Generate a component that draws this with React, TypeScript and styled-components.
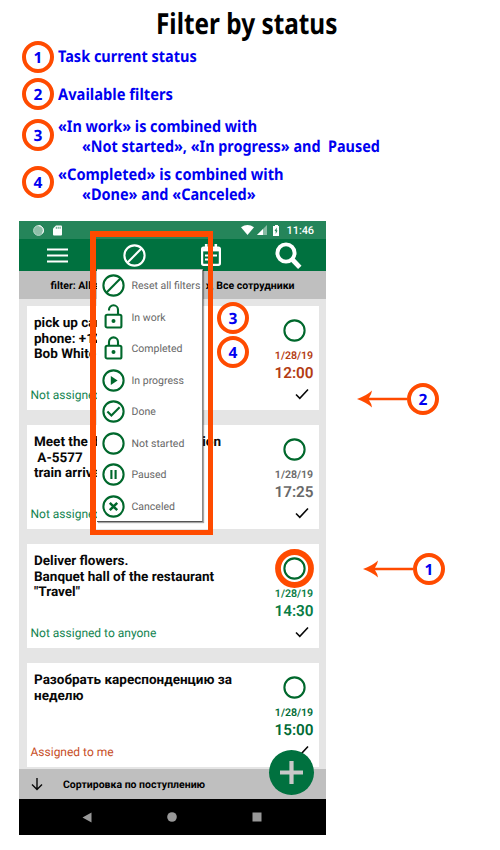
import React from "react";
import styled, { createGlobalStyle } from "styled-components";

const GREEN = "#00713f";
const ICON = "#00682c";
const ORANGE = "#ff4b00";

const Global = createGlobalStyle`
  * { box-sizing: border-box; }
  body { margin: 0; background: #fff; font-family: Roboto, sans-serif; text-rendering: geometricPrecision; }
  svg { display: block; flex: none; overflow: visible; }
`;

const Page = styled.main`
  position: relative;
  width: 500px;
  height: 850px;
  overflow: hidden;
  background: #fff;
`;

const Title = styled.h1`
  margin: 0;
  height: 40px;
  padding: 4px 0 0 156px;
  font: 700 29px/40px "Noto Sans", sans-serif;
  color: #000;
  white-space: pre;
`;

const Condensed = styled.span<{ $x: number }>`
  display: inline-block;
  transform: scaleX(${(p) => p.$x});
  transform-origin: left center;
`;

const Legend = styled.section`
  height: 181px;
  padding: 0.5px 0 0 22px;
`;

const LegendRow = styled.div<{ $gap: number }>`
  display: flex;
  align-items: flex-start;
  gap: 4px;
  margin-top: ${(p) => p.$gap}px;
  height: 32px;
`;

const LegendText = styled.div<{ $shift: number }>`
  display: flex;
  flex-direction: column;
  align-items: flex-start;
  margin-top: ${(p) => p.$shift}px;
  font: 700 16px/20px "Noto Sans", sans-serif;
  color: #0000f0;
  white-space: pre;
`;

const Indented = styled.span`
  padding-left: 24px;
`;

const Badge = styled.span`
  display: flex;
  flex: none;
  align-items: center;
  justify-content: center;
  width: 32px;
  height: 32px;
  border: 4px solid ${ORANGE};
  border-radius: 50%;
  background: #fff;
  color: #0000f0;
  font: 700 15.5px/24px "Noto Sans", sans-serif;
`;

const Callout = styled.div<{ $x: number; $y: number }>`
  position: absolute;
  left: ${(p) => p.$x}px;
  top: ${(p) => p.$y}px;
  display: flex;
  align-items: center;
`;

const Frame = styled.div`
  position: absolute;
  left: 90px;
  top: 231px;
  width: 123px;
  height: 304px;
  border: 6px solid ${ORANGE};
  border-width: 6px 5px 5px 6px;
`;

const Phone = styled.section`
  position: relative;
  display: flex;
  flex-direction: column;
  width: 307px;
  height: 614px;
  margin-left: 19px;
  background: #e5e5e5;
`;

const StatusBar = styled.div`
  display: flex;
  align-items: center;
  height: 18px;
  padding: 0 12px 0 14px;
  background: #25855a;
  color: #fff;
  font-size: 11px;
  font-weight: 500;
`;

const StatusSide = styled.div<{ $gap: number }>`
  display: flex;
  align-items: center;
  gap: ${(p) => p.$gap}px;
`;

const Clock = styled.span`
  padding-left: 2px;
  letter-spacing: -0.1px;
`;

const Spacer = styled.div`
  flex: 1;
`;

const Toolbar = styled.div`
  display: flex;
  align-items: center;
  height: 32px;
  padding-left: 28px;
  background: ${GREEN};
`;

const ToolSlot = styled.div<{ $width: number }>`
  width: ${(p) => p.$width}px;
`;

const FilterBar = styled.div`
  display: flex;
  align-items: center;
  justify-content: space-between;
  height: 28px;
  padding: 0 31.5px;
  background: #bfbfbf;
  font-size: 10.5px;
  font-weight: 700;
  white-space: pre;
`;

const List = styled.div`
  display: flex;
  flex-direction: column;
  gap: 15px;
  height: 470px;
  padding: 7px 7px 0 7.5px;
  overflow: hidden;
`;

const Card = styled.article`
  display: flex;
  flex: none;
  justify-content: space-between;
  height: 104px;
  background: #fff;
`;

const CardText = styled.div`
  display: flex;
  flex-direction: column;
  justify-content: space-between;
  width: 210px;
  padding: 10px 0 6px 4px;
`;

const CardTitle = styled.div`
  padding-left: 3.5px;
  font-size: 13.5px;
  font-weight: 700;
  line-height: 15.6px;
  color: #080808;
  white-space: pre;
`;

const SplitLine = styled.div`
  display: flex;
  justify-content: space-between;
  width: 187px;
`;

const Assignee = styled.div<{ $color: string }>`
  font-size: 12px;
  line-height: 18px;
  color: ${(p) => p.$color};
`;

const CardSide = styled.div<{ $color: string }>`
  display: flex;
  flex-direction: column;
  align-items: center;
  width: 50px;
  padding-top: 13px;
  color: ${(p) => p.$color};
`;

const DateText = styled.div`
  margin-top: 7px;
  font-size: 10.6px;
  font-weight: 600;
  line-height: 14px;
`;

const TimeText = styled.div`
  margin-top: 1px;
  font-size: 15.3px;
  font-weight: 600;
  line-height: 18px;
`;

const CheckSlot = styled.div`
  margin: 6px 0 0 15px;
`;

const SortBar = styled.div`
  display: flex;
  align-items: center;
  gap: 20px;
  height: 30px;
  padding-left: 12px;
  background: #bfbfbf;
  font-size: 10.5px;
  font-weight: 700;
`;

const NavBar = styled.div`
  display: flex;
  align-items: center;
  justify-content: space-between;
  height: 36px;
  padding: 0 64px 0 63px;
  background: #000;
`;

const Fab = styled.div`
  position: absolute;
  left: 250px;
  top: 529px;
  display: flex;
  align-items: center;
  justify-content: center;
  width: 45px;
  height: 45px;
  border-radius: 50%;
  background: ${GREEN};
`;

const Menu = styled.div`
  position: absolute;
  left: 78px;
  top: 48px;
  width: 106px;
  height: 253px;
  background: #fff;
  border-top: 1px solid #bdbdbd;
  border-right: 1px solid #8a8a8a;
  border-bottom: 1px solid #555;
  box-shadow: 1px 1px 1px rgba(0, 0, 0, 0.35);
`;

const MenuItem = styled.div`
  display: flex;
  align-items: center;
  gap: 6.5px;
  height: 31.5px;
  padding-left: 5px;
  font-size: 10.5px;
  color: #666;
  white-space: nowrap;
`;

type IconKind = "ban" | "unlock" | "lock" | "play" | "done" | "circle" | "pause" | "cancel";

const glyphs: Record<IconKind, React.ReactNode> = {
  ban: <path d="M18.4 4.6 4.6 18.4" />,
  unlock: null,
  lock: null,
  play: <path d="m8.8 7 6.8 4.5-6.8 4.5z" fill="currentColor" stroke="none" />,
  done: <path d="m5.4 11.5 4 4 8.2-8.2" />,
  circle: null,
  pause: <path d="M9.4 7v9M13.6 7v9" />,
  cancel: <path d="m7.8 7.8 7.4 7.4M15.2 7.8l-7.4 7.4" strokeWidth="2.5" />,
};

function StatusIcon({ kind, color = ICON }: { kind: IconKind; color?: string }) {
  const locked = kind === "lock" || kind === "unlock";
  return (
    <svg width="23" height="23" viewBox="0 0 23 23" fill="none" stroke={color} color={color} strokeWidth="2.1">
      {locked ? (
        <>
          <rect x="3.6" y="8.7" width="15.8" height="12.8" rx="1.6" />
          <path d={kind === "lock" ? "M7 8.6V4.9a4.5 4.5 0 0 1 9 0v3.7" : "M7 4.4v-.6a4.5 4.5 0 0 1 9 0v4.8"} />
          <circle cx="11.5" cy="15" r="2" fill={color} stroke="none" />
        </>
      ) : (
        <>
          <circle cx="11.5" cy="11.5" r="10.1" />
          {glyphs[kind]}
        </>
      )}
    </svg>
  );
}

const Check = () => (
  <svg width="14" height="12" viewBox="0 0 14 12" fill="none" stroke="#080808" strokeWidth="1.6">
    <path d="m1 6.5 3.8 3.8L13 1.5" />
  </svg>
);

const Arrow = () => (
  <svg width="50" height="18" viewBox="0 0 50 18">
    <path d="M0 9Q9 6 15 .5 14.5 4.5 12 7.7H50v2.6H12Q14.5 13.5 15 17.5 9 12 0 9Z" fill={ORANGE} />
  </svg>
);

const menuItems: [IconKind, string][] = [
  ["ban", "Reset all filters"],
  ["unlock", "In work"],
  ["lock", "Completed"],
  ["play", "In progress"],
  ["done", "Done"],
  ["circle", "Not started"],
  ["pause", "Paused"],
  ["cancel", "Canceled"],
];

type Task = { title: React.ReactNode; who: string; whoColor: string; time: string; color: string };

const tasks: Task[] = [
  { title: "pick up car\nphone: +12\nBob White", who: "Not assigned", whoColor: "#138451", time: "12:00", color: "#b33b12" },
  {
    title: (
      <>
        <SplitLine><span>Meet the d</span><span>ion</span></SplitLine>
        {" A-5577\ntrain arrival"}
      </>
    ),
    who: "Not assigned", whoColor: "#138451", time: "17:25", color: "#686868",
  },
  { title: "Deliver flowers.\nBanquet hall of the restaurant\n\"Travel\"", who: "Not assigned to anyone", whoColor: "#138451", time: "14:30", color: "#087c45" },
  { title: "Разобрать кареспонденцию за\nнеделю", who: "Assigned to me", whoColor: "#c74e27", time: "15:00", color: "#006b35" },
];

export default function App() {
  return (
    <Page>
      <Global />
      <Title><Condensed $x={0.84}>Filter by status</Condensed></Title>
      <Legend>
        <LegendRow $gap={0}>
          <Badge>1</Badge>
          <LegendText $shift={5.5}><Condensed $x={0.905}>Task current status</Condensed></LegendText>
        </LegendRow>
        <LegendRow $gap={5.5}>
          <Badge>2</Badge>
          <LegendText $shift={6}><Condensed $x={0.92}>Available filters</Condensed></LegendText>
        </LegendRow>
        <LegendRow $gap={9}>
          <Badge>3</Badge>
          <LegendText $shift={-3}>
            <Condensed $x={0.9}>«In work» is combined with</Condensed>
            <Indented><Condensed $x={0.9}>{"«Not started», «In progress» and  Paused"}</Condensed></Indented>
          </LegendText>
        </LegendRow>
        <LegendRow $gap={15}>
          <Badge>4</Badge>
          <LegendText $shift={-2}>
            <Condensed $x={0.915}>«Completed» is combined with</Condensed>
            <Indented><Condensed $x={0.905}>«Done» and «Canceled»</Condensed></Indented>
          </LegendText>
        </LegendRow>
      </Legend>

      <Phone>
        <StatusBar>
          <StatusSide $gap={9}>
            <svg width="11" height="11" viewBox="0 0 11 11">
              <circle cx="5.5" cy="5.5" r="4.9" fill="#8dbfa8" stroke="#b9d8ca" />
              <path d="M5.5.6a4.9 4.9 0 0 1 4 7.8" fill="none" stroke="#fff" />
            </svg>
            <svg width="9" height="11" viewBox="0 0 9 11">
              <path d="M3 .5h5q1 0 1 1v8q0 1-1 1H1q-1 0-1-1v-6z" fill="#fff" />
              <path d="M3.3 1.8v2M5.2 1.8v2M7.1 1.8v2" stroke="#25855a" strokeWidth=".8" />
            </svg>
          </StatusSide>
          <Spacer />
          <StatusSide $gap={3}>
            <svg width="13" height="10" viewBox="0 0 13 10"><path d="M0 2.2Q6.5-2 13 2.2L6.5 10z" fill="#fff" /></svg>
            <svg width="10" height="10" viewBox="0 0 10 10">
              <path d="M10 0v10H0z" fill="#87bba3" />
              <path d="M6 4v6H0z" fill="#fff" />
            </svg>
            <svg width="12" height="11" viewBox="2 0 12 11">
              <path d="M6 1h1V0h3v1h1v10H5V1z" fill="#fff" />
              <path d="M8.7 2.5 6.5 6h1.2v3L9.6 5.4H8.7z" fill="#25855a" />
            </svg>
            <Clock>11:46</Clock>
          </StatusSide>
        </StatusBar>
        <Toolbar>
          <ToolSlot $width={76}>
            <svg width="21" height="15" viewBox="0 0 21 15" stroke="#fff" strokeWidth="2.2"><path d="M0 1.5h21M0 7.5h21M0 13.5h21" /></svg>
          </ToolSlot>
          <ToolSlot $width={78}><StatusIcon kind="ban" color="#fff" /></ToolSlot>
          <ToolSlot $width={74}>
            <svg width="20" height="22" viewBox="0 0 20 22" fill="none" stroke="#fff" strokeWidth="2.2">
              <rect x="1.1" y="3.6" width="17.8" height="17.2" rx="1.5" />
              <path d="M1 5.8h18" strokeWidth="3.2" />
              <path d="M5.2 0v5M14.8 0v5" strokeWidth="2.6" />
              <path d="M4 11.5h12M4 15.5h7" strokeWidth="2" />
            </svg>
          </ToolSlot>
          <svg width="27" height="27" viewBox="0 0 27 27" fill="none" stroke="#fff">
            <circle cx="11" cy="11" r="8.6" strokeWidth="3.9" />
            <path d="m17.3 17.5 7.5 7.8" strokeWidth="4.8" />
          </svg>
        </Toolbar>
        <FilterBar>
          <span>filter: All s</span>
          <span>х, Все сотрудники</span>
        </FilterBar>
        <List>
          {tasks.map((task) => (
            <Card key={task.time}>
              <CardText>
                <CardTitle>{task.title}</CardTitle>
                <Assignee $color={task.whoColor}>{task.who}</Assignee>
              </CardText>
              <CardSide $color={task.color}>
                <StatusIcon kind="circle" />
                <DateText>1/28/19</DateText>
                <TimeText>{task.time}</TimeText>
                <CheckSlot><Check /></CheckSlot>
              </CardSide>
            </Card>
          ))}
        </List>
        <SortBar>
          <svg width="12" height="14" viewBox="0 0 12 14" fill="none" stroke="#080808" strokeWidth="1.4"><path d="M6 1v11.5M1 7.5l5 5 5-5" /></svg>
          <span>Сортировка по поступлению</span>
        </SortBar>
        <NavBar>
          <svg width="10" height="11" viewBox="0 0 10 11"><path d="M9.5.5v10L.5 5.5z" fill="#999" /></svg>
          <svg width="10" height="10" viewBox="0 0 10 10"><circle cx="5" cy="5" r="4.8" fill="#999" /></svg>
          <svg width="10" height="10" viewBox="0 0 10 10"><rect x=".5" y=".5" width="9" height="9" fill="#999" /></svg>
        </NavBar>
        <Menu>
          {menuItems.map(([kind, label]) => (
            <MenuItem key={kind}><StatusIcon kind={kind} />{label}</MenuItem>
          ))}
        </Menu>
        <Fab>
          <svg width="23" height="23" viewBox="0 0 23 23" stroke="#c8c8c8" strokeWidth="4.2"><path d="M11.5 0v23M0 11.5h23" /></svg>
        </Fab>
      </Phone>

      <Frame />
      <Callout $x={217} $y={302}><Badge>3</Badge></Callout>
      <Callout $x={217} $y={336}><Badge>4</Badge></Callout>
      <Callout $x={357} $y={382.5}><Arrow /><Badge>2</Badge></Callout>
      <Callout $x={363} $y={552.5}><Arrow /><Badge>1</Badge></Callout>
      <Callout $x={274.5} $y={549}>
        <svg width="39" height="39" viewBox="0 0 39 39" fill="none" stroke={ORANGE}><circle cx="19.5" cy="19.5" r="16.5" strokeWidth="5.8" /></svg>
      </Callout>
    </Page>
  );
}
